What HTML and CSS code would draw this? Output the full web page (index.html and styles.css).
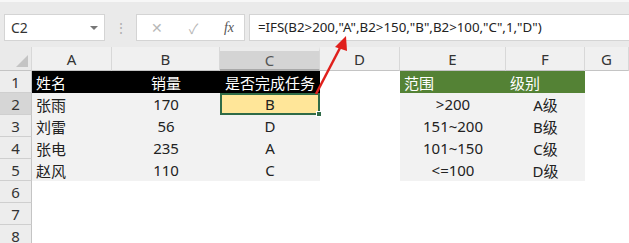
FILE: index.html
```html
<!DOCTYPE html>
<html lang="zh">
<head>
  <meta charset="utf-8">
  <link rel="stylesheet" href="styles.css">
</head>
<body>
  <div class="bar">
    <div class="namebox">
      <span>C2</span>
      <span class="drop"></span>
    </div>
    <div class="dots">⋮</div>
    <div class="btns">
      <span class="btn-x">✕</span>
      <span class="btn-ok">✓</span>
      <span class="btn-fx">fx</span>
    </div>
    <div class="formula">=IFS(B2&gt;200,"A",B2&gt;150,"B",B2&gt;100,"C",1,"D")</div>
  </div>

  <div class="sheet">
    <!-- column headers -->
    <div class="ch corner"><span class="tri"></span></div>
    <div class="ch">A</div>
    <div class="ch">B</div>
    <div class="ch sel">C</div>
    <div class="ch">D</div>
    <div class="ch">E</div>
    <div class="ch">F</div>
    <div class="ch">G</div>

    <!-- row 1 -->
    <div class="rh">1</div>
    <div class="c dark">姓名</div>
    <div class="c dark mid">销量</div>
    <div class="c dark mid">是否完成任务</div>
    <div class="c"></div>
    <div class="c green">范围</div>
    <div class="c green">级别</div>
    <div class="c"></div>

    <!-- row 2 -->
    <div class="rh sel">2</div>
    <div class="c grey">张雨</div>
    <div class="c grey mid">170</div>
    <div class="c active mid">B<span class="handle"></span></div>
    <div class="c"></div>
    <div class="c grey mid">&gt;200</div>
    <div class="c grey mid">A级</div>
    <div class="c"></div>

    <!-- row 3 -->
    <div class="rh">3</div>
    <div class="c grey">刘雷</div>
    <div class="c grey mid">56</div>
    <div class="c grey mid">D</div>
    <div class="c"></div>
    <div class="c grey mid">151~200</div>
    <div class="c grey mid">B级</div>
    <div class="c"></div>

    <!-- row 4 -->
    <div class="rh">4</div>
    <div class="c grey">张电</div>
    <div class="c grey mid">235</div>
    <div class="c grey mid">A</div>
    <div class="c"></div>
    <div class="c grey mid">101~150</div>
    <div class="c grey mid">C级</div>
    <div class="c"></div>

    <!-- row 5 -->
    <div class="rh">5</div>
    <div class="c grey">赵风</div>
    <div class="c grey mid">110</div>
    <div class="c grey mid">C</div>
    <div class="c"></div>
    <div class="c grey mid">&lt;=100</div>
    <div class="c grey mid">D级</div>
    <div class="c"></div>

    <div class="rh">6</div>
    <div class="c blank"></div>
    <div class="rh">7</div>
    <div class="c blank"></div>
    <div class="rh">8</div>
    <div class="c blank"></div>
  </div>

  <!-- red arrow pointing at the formula -->
  <svg class="arrow" width="629" height="243" viewBox="0 0 629 243">
    <line x1="316" y1="94" x2="341" y2="46" stroke="#e0201c" stroke-width="2.5"/>
    <polygon points="346,36 335,47 347,51" fill="#e0201c"/>
  </svg>
</body>
</html>
```

FILE: styles.css
```css
* {
  box-sizing: border-box;
}
body {
  margin: 0;
  width: 629px;
  height: 243px;
  overflow: hidden;
  background: #fff;
  font-family: "Noto Sans", "Noto Sans CJK SC", sans-serif;
  color: #222;
  position: relative;
}
.bar {
  display: flex;
  align-items: center;
  height: 47px;
  padding: 13px 0 7px 4px;
  background: #eaeaea;
  border-top: 2px solid #f7f7f7;
}
.namebox {
  display: flex;
  align-items: center;
  justify-content: space-between;
  width: 101px;
  height: 27px;
  padding: 0 6px 0 6px;
  background: #fff;
  border: 1px solid #d4d4d4;
  font-size: 14px;
  color: #333;
}
.drop {
  width: 0;
  height: 0;
  border-left: 4px solid transparent;
  border-right: 4px solid transparent;
  border-top: 4px solid #777;
}
.dots {
  width: 31px;
  text-align: center;
  color: #b0b0b0;
  font-size: 14px;
}
.btns {
  display: flex;
  align-items: center;
  justify-content: space-between;
  width: 109px;
  height: 27px;
  padding: 0 10px 0 14px;
  background: #fff;
  border: 1px solid #d4d4d4;
  color: #b8b8b8;
  font-size: 14px;
}
.btn-fx {
  font-family: "Liberation Serif", serif;
  font-style: italic;
  color: #555;
  font-size: 14px;
}
.formula {
  flex: 1;
  height: 27px;
  margin-left: 4px;
  padding: 0 8px;
  line-height: 25px;
  background: #fff;
  border: 1px solid #d4d4d4;
  border-right: none;
  font-size: 13.3px;
  color: #222;
  white-space: nowrap;
}
.sheet {
  display: grid;
  grid-template-columns: 32px 80px 108px 100px 80px 106px 79px 1fr;
  grid-template-rows: 24px repeat(7, 22px) 22px;
}
.ch {
  display: flex;
  align-items: center;
  justify-content: center;
  background: #f0f0f0;
  border-right: 1px solid #d8d8d8;
  border-bottom: 1px solid #c4c4c4;
  font-size: 15px;
  color: #333;
}
.ch.sel {
  background: #d4d4d4;
  border-top: 4px solid #ececec;
  border-bottom: 2px solid #a8a8a8;
  color: #555;
}
.corner {
  position: relative;
  background: #eaeaea;
}
.tri {
  position: absolute;
  right: 3px;
  bottom: 3px;
  width: 0;
  height: 0;
  border-left: 12px solid transparent;
  border-bottom: 12px solid #c4c4c4;
}
.rh {
  display: flex;
  align-items: center;
  justify-content: center;
  background: #ededed;
  border-right: 1px solid #c4c4c4;
  border-bottom: 1px solid #cfcfcf;
  font-size: 15px;
  color: #333;
}
.rh.sel {
  background: #d6d6d6;
}
.c {
  display: flex;
  align-items: center;
  padding: 0 4px;
  font-size: 15px;
  white-space: nowrap;
}
.c.blank {
  grid-column: 2 / -1;
}
.dark {
  background: #000;
  color: #fff;
}
.green {
  background: #548235;
  color: #fff;
}
.grey {
  background: #f2f2f2;
}
.mid {
  justify-content: center;
}
.active {
  position: relative;
  background: #ffe699;
  border: 2px solid #2f6b47;
}
.handle {
  position: absolute;
  right: -4px;
  bottom: -4px;
  width: 6px;
  height: 6px;
  background: #2f6b47;
  border: 1px solid #fff;
}
.arrow {
  position: absolute;
  left: 0;
  top: 0;
  pointer-events: none;
}
```
